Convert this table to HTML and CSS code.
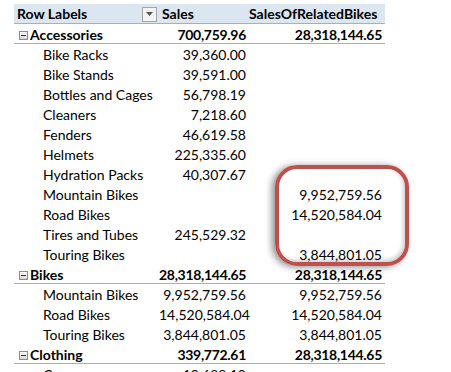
FILE: index.html
```html
<!DOCTYPE html>
<html>
<head>
<meta charset="utf-8">
<link rel="stylesheet" href="styles.css">
</head>
<body>
<div class="pivot">
  <div class="row head">
    <div class="c lab">Row Labels<span class="dd"><svg width="7" height="4" viewBox="0 0 7 4"><path d="M0 0H7L3.5 4Z" fill="#555"/></svg></span></div>
    <div class="c sales-h">Sales</div>
    <div class="c rel-h">SalesOfRelatedBikes</div>
  </div>

  <div class="row grp">
    <div class="c lab"><span class="tog"></span>Accessories</div>
    <div class="c num">700,759.96</div>
    <div class="c num">28,318,144.65</div>
  </div>
  <div class="row"><div class="c lab sub">Bike Racks</div><div class="c num">39,360.00</div><div class="c num"></div></div>
  <div class="row"><div class="c lab sub">Bike Stands</div><div class="c num">39,591.00</div><div class="c num"></div></div>
  <div class="row"><div class="c lab sub">Bottles and Cages</div><div class="c num">56,798.19</div><div class="c num"></div></div>
  <div class="row"><div class="c lab sub">Cleaners</div><div class="c num">7,218.60</div><div class="c num"></div></div>
  <div class="row"><div class="c lab sub">Fenders</div><div class="c num">46,619.58</div><div class="c num"></div></div>
  <div class="row"><div class="c lab sub">Helmets</div><div class="c num">225,335.60</div><div class="c num"></div></div>
  <div class="row"><div class="c lab sub">Hydration Packs</div><div class="c num">40,307.67</div><div class="c num"></div></div>
  <div class="row"><div class="c lab sub">Mountain Bikes</div><div class="c num"></div><div class="c num">9,952,759.56</div></div>
  <div class="row"><div class="c lab sub">Road Bikes</div><div class="c num"></div><div class="c num">14,520,584.04</div></div>
  <div class="row"><div class="c lab sub">Tires and Tubes</div><div class="c num">245,529.32</div><div class="c num"></div></div>
  <div class="row"><div class="c lab sub">Touring Bikes</div><div class="c num"></div><div class="c num">3,844,801.05</div></div>

  <div class="row grp">
    <div class="c lab"><span class="tog"></span>Bikes</div>
    <div class="c num">28,318,144.65</div>
    <div class="c num">28,318,144.65</div>
  </div>
  <div class="row"><div class="c lab sub">Mountain Bikes</div><div class="c num">9,952,759.56</div><div class="c num">9,952,759.56</div></div>
  <div class="row"><div class="c lab sub">Road Bikes</div><div class="c num">14,520,584.04</div><div class="c num">14,520,584.04</div></div>
  <div class="row"><div class="c lab sub">Touring Bikes</div><div class="c num">3,844,801.05</div><div class="c num">3,844,801.05</div></div>

  <div class="row grp">
    <div class="c lab"><span class="tog"></span>Clothing</div>
    <div class="c num">339,772.61</div>
    <div class="c num">28,318,144.65</div>
  </div>
  <div class="row"><div class="c lab sub">Caps</div><div class="c num">19,688.10</div><div class="c num"></div></div>

  <div class="callout"></div>
</div>
</body>
</html>
```

FILE: styles.css
```css
html, body {
  margin: 0;
  padding: 0;
  background: #fff;
  overflow: hidden;
  height: 372px;
}
.pivot {
  position: relative;
  margin: 4px 0 0 14px;
  width: 371px;
  font-family: Lato, "Open Sans", sans-serif;
  font-size: 14px;
  color: #000;
}
.row {
  display: grid;
  grid-template-columns: 145px 90px 136px;
  height: 18px;
  padding-top: 2px;
  align-items: center;
  line-height: 18px;
}
.c {
  white-space: nowrap;
}
.head {
  background: #dce6f1;
  border-bottom: 1px solid #95b3d7;
  height: 18px;
  padding-top: 1px;
  font-weight: bold;
}
.head .lab {
  display: flex;
  align-items: center;
  justify-content: space-between;
  padding-left: 3px;
}
.dd {
  width: 13px;
  height: 13px;
  border: 1px solid #a6a6a6;
  background: #f2f2f2;
  display: flex;
  align-items: center;
  justify-content: center;
  margin-right: 2px;
}
.sales-h {
  padding-left: 3px;
}
.rel-h {
  text-align: right;
  padding-right: 8px;
}
.grp {
  font-weight: bold;
  border-bottom: 1px solid #95b3d7;
  height: 17px;
}
.grp .num {
  letter-spacing: -0.3px;
}
.grp .lab {
  display: flex;
  align-items: center;
  padding-left: 5px;
}
.tog {
  width: 7px;
  height: 7px;
  border: 1px solid #8c8c8c;
  background: linear-gradient(#fbfbfb, #d9d9d9);
  position: relative;
  margin-right: 2px;
  flex: none;
}
.tog::after {
  content: "";
  position: absolute;
  left: 1px;
  right: 1px;
  top: 3px;
  height: 1px;
  background: #333;
}
.sub {
  padding-left: 29px;
}
.num {
  text-align: right;
  padding-right: 3px;
}
.callout {
  position: absolute;
  left: 261px;
  top: 161px;
  width: 126px;
  height: 93px;
  border: 4px solid #c0504d;
  border-radius: 22px;
  box-shadow: -3px 1px 7px rgba(0, 0, 0, 0.45), inset -2px -2px 4px rgba(0, 0, 0, 0.2);
}
```
